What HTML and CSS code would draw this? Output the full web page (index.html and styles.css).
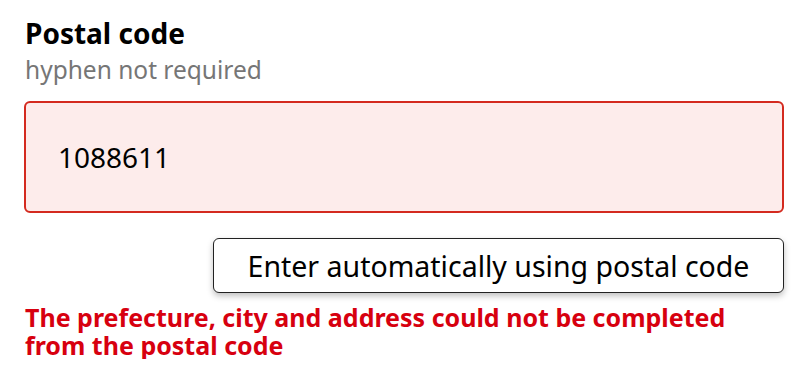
FILE: index.html
```html
<!DOCTYPE html>
<html>
<head>
  <title>Postal code</title>
  <link rel="stylesheet" href="styles.css">
</head>
<body>
  <div class="field">
    <label class="label" for="postal">Postal code</label>
    <div class="hint">hyphen not required</div>
    <input class="postal-input" id="postal" type="text" value="1088611">
    <div class="actions">
      <button class="auto-button" type="button">Enter automatically using postal code</button>
    </div>
    <div class="error">The prefecture, city and address could not be completed from the postal code</div>
  </div>
</body>
</html>
```

FILE: styles.css
```css
body {
  margin: 0;
  background-color: #fff;
  font-family: "Noto Sans", sans-serif;
  color: #000;
}

.field {
  padding: 14px 24px 0 24px;
  display: flex;
  flex-direction: column;
}

.label {
  font-size: 28px;
  font-weight: bold;
  line-height: 38px;
  padding-left: 1px;
}

.hint {
  margin-top: 2px;
  font-size: 24.5px;
  color: #767676;
  line-height: 32px;
  padding-left: 1px;
}

.postal-input {
  margin-top: 15px;
  height: 112px;
  box-sizing: border-box;
  border: solid 2px #d42a1f;
  border-radius: 6px;
  background-color: #fdeceb;
  padding: 0 32px;
  font-family: "Noto Sans", sans-serif;
  font-size: 28px;
  color: #000;
  outline: none;
}

.actions {
  display: flex;
  justify-content: flex-end;
  margin-top: 25px;
}

.auto-button {
  width: 571px;
  height: 55px;
  border: solid 1.5px #222;
  border-radius: 6px;
  background-color: #fff;
  box-shadow: 0 3px 6px rgba(0, 0, 0, 0.25);
  font-family: "Noto Sans", sans-serif;
  font-size: 28.5px;
  color: #000;
  cursor: pointer;
}

.error {
  margin-top: 10px;
  max-width: 740px;
  padding-left: 1px;
  color: #d7000f;
  font-size: 25px;
  font-weight: bold;
  line-height: 28px;
}
```
